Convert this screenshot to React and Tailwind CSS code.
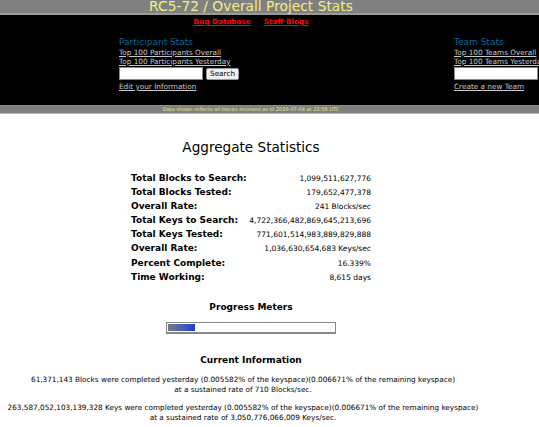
const stats = [
  ['Total Blocks to Search:', '1,099,511,627,776'],
  ['Total Blocks Tested:', '179,652,477,378'],
  ['Overall Rate:', '241 Blocks/sec'],
  ['Total Keys to Search:', '4,722,366,482,869,645,213,696'],
  ['Total Keys Tested:', '771,601,514,983,889,829,888'],
  ['Overall Rate:', '1,036,630,654,683 Keys/sec'],
  ['Percent Complete:', '16.339%'],
  ['Time Working:', '8,615 days'],
];

const percent = 16.339;

function StatsBox({ title, links, footer, withButton }) {
  return (
    <div className="flex flex-col">
      <div className="text-[9px] leading-[11px] text-[#0a6696]">{title}</div>
      {links.map((l) => (
        <a key={l} href="#" className="text-[7.3px] leading-[9px] text-[#c8c8c8] underline">
          {l}
        </a>
      ))}
      <div className="flex items-center gap-[3px] mt-[1px] h-[13px]">
        <input className="w-[84px] h-[13px] bg-white border border-[#888] outline-none" />
        {withButton && (
          <button className="h-[12px] px-[3px] bg-[#f0f0f0] border border-[#999] rounded-[2px] text-[7.3px] leading-[10px] text-black">
            Search
          </button>
        )}
      </div>
      <a href="#" className="mt-[2px] text-[7.3px] leading-[9px] text-[#c8c8c8] underline">
        {footer}
      </a>
    </div>
  );
}

export default function App() {
  return (
    <div className="w-[539px] h-[427px] overflow-hidden bg-white font-['DejaVu_Sans',sans-serif]">
      {/* top bar */}
      <div className="h-[13px] bg-[#808080]">
        <div className="w-[502px] text-center text-[13.8px] leading-[13px] text-[#f0f080] whitespace-nowrap">
          RC5-72 / Overall Project Stats
        </div>
      </div>
      <div className="h-[2px] bg-[#9a9a9a]" />

      {/* black header */}
      <div className="h-[90px] bg-black">
        <div className="w-[502px] flex justify-center gap-[13px] pt-[2px] text-[7.3px] leading-[9px] font-bold">
          <a href="#" className="text-[#ff0000] underline">Bug Database</a>
          <a href="#" className="text-[#ff0000] underline">Staff Blogs</a>
        </div>
        <div className="flex pl-[119px] pt-[11px] whitespace-nowrap">
          <div className="w-[335px] shrink-0">
            <StatsBox
              title="Participant Stats"
              links={['Top 100 Participants Overall', 'Top 100 Participants Yesterday']}
              footer="Edit your Information"
              withButton
            />
          </div>
          <div className="shrink-0">
            <StatsBox
              title="Team Stats"
              links={['Top 100 Teams Overall', 'Top 100 Teams Yesterday']}
              footer="Create a new Team"
            />
          </div>
        </div>
      </div>

      {/* data bar */}
      <div className="h-[8px] bg-[#808080] border-t border-[#8c8c8c]">
        <div className="w-[502px] text-center text-[5px] leading-[7px] text-[#e8e890] whitespace-nowrap">
          Data shown reflects all blocks received as of 2026-07-04 at 23:59 UTC
        </div>
      </div>
      <div className="h-[1px] bg-[#b0b0b0]" />

      {/* main */}
      <div className="w-[502px] flex flex-col items-center">
        <div className="mt-[25px] text-[13.6px] leading-[17px] text-black">Aggregate Statistics</div>

        <div className="mt-[15px] w-[240px] flex flex-col">
          {stats.map(([k, v], i) => (
            <div key={i} className="flex items-baseline justify-between h-[14.1px]">
              <span className="text-[9px] leading-[14px] font-bold text-black">{k}</span>
              <span className="text-[7.5px] leading-[14px] text-black">{v}</span>
            </div>
          ))}
        </div>

        <div className="mt-[18px] text-[9px] leading-[11px] font-bold text-black">Progress Meters</div>
        <div className="mt-[9px] w-[170px] h-[12px] border border-[#888] border-b-2 bg-white p-[1px]">
          <div
            className="h-full bg-gradient-to-r from-[#7a7a86] to-[#2238d0]"
            style={{ width: `${percent}%` }}
          />
        </div>

        <div className="mt-[21px] text-[9px] leading-[11px] font-bold text-black">Current Information</div>

        <div className="mt-[9px] pr-[16px] text-center text-[7.3px] leading-[10px] text-black whitespace-nowrap">
          <p>
            61,371,143 Blocks were completed yesterday (0.005582% of the keyspace)(0.006671% of the remaining keyspace)
            <br />
            at a sustained rate of 710 Blocks/sec.
          </p>
          <p className="mt-[8px]">
            263,587,052,103,139,328 Keys were completed yesterday (0.005582% of the keyspace)(0.006671% of the remaining keyspace)
            <br />
            at a sustained rate of 3,050,776,066,009 Keys/sec.
          </p>
        </div>
      </div>
    </div>
  );
}
